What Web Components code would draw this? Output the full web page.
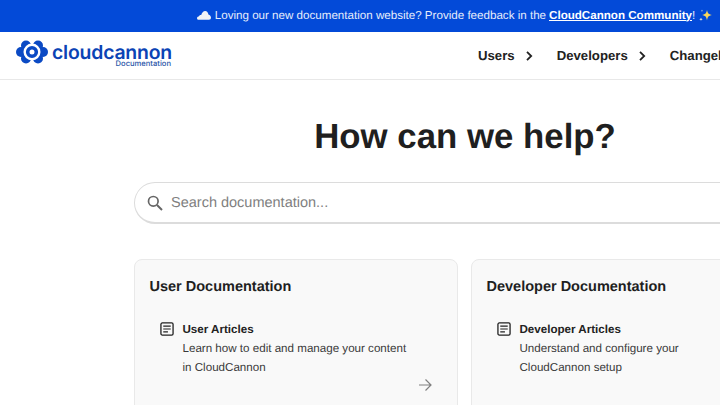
<!DOCTYPE html>
<html lang="en">
<head>
<meta charset="utf-8">
<title>CloudCannon Documentation</title>
<style>
  html, body { margin: 0; height: 405px; overflow: hidden; background: #fff; }
  body { font-family: "Liberation Sans", Arial, sans-serif; color: #1f1f1f; text-rendering: geometricPrecision; }
</style>
</head>
<body>
<docs-page>
  <top-banner slot="banner"></top-banner>
  <site-header slot="header"></site-header>
  <search-hero slot="hero"></search-hero>
  <doc-card title="User Documentation" item="User Articles" arrow>Learn how to edit and manage your content<br>in CloudCannon</doc-card>
  <doc-card title="Developer Documentation" item="Developer Articles">Understand and configure your<br>CloudCannon setup</doc-card>
</docs-page>

<script>
const pageTemplate = document.createElement('template');
pageTemplate.innerHTML = `
  <style>
    :host { display: block; width: 930px; height: 405px; overflow: hidden; }
    .cards {
      display: grid;
      grid-template-columns: 324px 325px;
      gap: 13px;
      padding: 35px 0 0 134px;
    }
  </style>
  <slot name="banner"></slot>
  <slot name="header"></slot>
  <slot name="hero"></slot>
  <div class="cards"><slot></slot></div>
`;

class DocsPage extends HTMLElement {
  constructor() {
    super();
    this.attachShadow({ mode: 'open' }).appendChild(pageTemplate.content.cloneNode(true));
  }
}

const bannerTemplate = document.createElement('template');
bannerTemplate.innerHTML = `
  <style>
    :host {
      display: flex;
      justify-content: center;
      align-items: center;
      box-sizing: border-box;
      height: 32px;
      width: 930px;
      padding: 0 20px 2px 0;
      background: #034ad8;
      color: #e6edfb;
      font-size: 11.600px;
      white-space: nowrap;
    }
    svg { flex: none; }
    .cloud { margin-right: 4px; }
    .spark { margin-left: 3px; }
    a { color: #fff; font-weight: 700; text-decoration: underline; margin-left: 3px; }
  </style>
  <svg class="cloud" width="14" height="10" viewBox="0 0 14 10">
    <path fill="#f1f3f6" d="M1.500 9.800C.5 9.800 0 9 0 8.200 0 7.200.8 6.500 1.800 6.500 2.200 5.300 3.200 4.800 4.200 5 4.800 3 6.300 1 8.200 1c1.700 0 3 1.600 3.200 3.500C13 4.900 14 6.400 14 7.800c0 1.300-.8 2-2 2z"/>
  </svg>
  <span>Loving our new documentation website? Provide feedback in the<a href="#">CloudCannon Community</a>!</span>
  <svg class="spark" width="15" height="15" viewBox="0 0 15 15">
    <path fill="#fbd75b" d="M9 2c.6 3.200 1.500 4.300 5 5-3.500.7-4.400 1.800-5 5.500-.6-3.700-1.500-4.800-5-5.500 3.500-.7 4.400-1.800 5-5z"/>
    <path fill="#f4f1dc" d="M3 9.500c.2 1.200.6 1.600 1.800 1.800-1.200.2-1.600.6-1.800 1.900-.2-1.300-.6-1.700-1.800-1.900 1.200-.2 1.600-.6 1.800-1.800z"/>
    <path fill="#f4f1dc" d="M4 1.500c.1.900.4 1.200 1.300 1.300-.9.1-1.200.4-1.300 1.300-.1-.9-.4-1.200-1.300-1.300.9-.1 1.200-.4 1.300-1.300z"/>
  </svg>
`;

class TopBanner extends HTMLElement {
  constructor() {
    super();
    this.attachShadow({ mode: 'open' }).appendChild(bannerTemplate.content.cloneNode(true));
  }
}

const headerTemplate = document.createElement('template');
headerTemplate.innerHTML = `
  <style>
    :host {
      display: flex;
      align-items: center;
      box-sizing: border-box;
      height: 48px;
      padding: 0 0 0 16px;
      border-bottom: 1px solid #e8e8e8;
      white-space: nowrap;
    }
    .logo { display: flex; align-items: flex-start; gap: 4px; margin-bottom: 3px; }
    .words { display: flex; flex-direction: column; align-items: flex-end; margin-top: 4px; }
    .name { font: 600 19.400px/16px Inter, sans-serif; letter-spacing: -.2px; color: #0b43b5; }
    .sub { font: 500 7.600px/8px Inter, sans-serif; margin-right: 1px; color: #2a55a8; }
    nav { display: flex; align-items: center; margin-left: 306px; flex: 1; }
    .link { display: flex; align-items: center; font-size: 13.200px; font-weight: 700; color: #222; }
    .link svg { margin: 0 24px 0 10px; }
  </style>
  <div class="logo">
    <svg width="32" height="24" viewBox="0 0 32 24">
      <g fill="#0b4ac4">
        <circle cx="10" cy="5.500" r="5"/><circle cx="5" cy="12" r="5"/><circle cx="8" cy="12" r="5"/><circle cx="10" cy="18.500" r="5"/>
        <circle cx="22" cy="5.500" r="5"/><circle cx="27" cy="12" r="5"/><circle cx="24" cy="12" r="5"/><circle cx="22" cy="18.500" r="5"/>
      </g>
      <circle cx="16" cy="12" r="8.500" fill="#fff"/>
      <circle cx="16" cy="12" r="4.300" fill="none" stroke="#0b4ac4" stroke-width="3.600"/>
    </svg>
    <div class="words">
      <span class="name">cloudcannon</span>
      <span class="sub">Documentation</span>
    </div>
  </div>
  <nav>
    <span class="link">Users<svg width="8" height="12" viewBox="0 0 8 12"><path d="M2 1.800L6.200 6 2 10.200" fill="none" stroke="#222" stroke-width="1.800"/></svg></span>
    <span class="link">Developers<svg width="8" height="12" viewBox="0 0 8 12"><path d="M2 1.800L6.200 6 2 10.200" fill="none" stroke="#222" stroke-width="1.800"/></svg></span>
    <span class="link">Changelog</span>
  </nav>
`;

class SiteHeader extends HTMLElement {
  constructor() {
    super();
    this.attachShadow({ mode: 'open' }).appendChild(headerTemplate.content.cloneNode(true));
  }
}

const heroTemplate = document.createElement('template');
heroTemplate.innerHTML = `
  <style>
    :host { display: block; padding-left: 134px; width: 662px; }
    h1 {
      margin: 0;
      padding-top: 36px;
      text-align: center;
      font-size: 34.800px;
      line-height: 42px;
      font-weight: 700;
      color: #1f1f1f;
    }
    .search {
      display: flex;
      align-items: center;
      gap: 8px;
      box-sizing: border-box;
      height: 42px;
      margin-top: 24px;
      padding-left: 12px;
      border: 1px solid #dcdcdc;
      border-bottom-width: 2px;
      border-radius: 21px;
      color: #808080;
      font-size: 14.500px;
    }
  </style>
  <h1>How can we help?</h1>
  <div class="search">
    <svg width="16" height="16" viewBox="0 0 16 16">
      <circle cx="6.300" cy="6.300" r="4.800" fill="none" stroke="#666" stroke-width="1.700"/>
      <path d="M10 10l5 5" stroke="#666" stroke-width="1.900"/>
    </svg>
    <span>Search documentation...</span>
  </div>
`;

class SearchHero extends HTMLElement {
  constructor() {
    super();
    this.attachShadow({ mode: 'open' }).appendChild(heroTemplate.content.cloneNode(true));
  }
}

const cardTemplate = document.createElement('template');
cardTemplate.innerHTML = `
  <style>
    :host {
      display: block;
      box-sizing: border-box;
      height: 200px;
      padding: 18px 15px 17px 14.500px;
      background: #f9f9f9;
      border: 1px solid #e9e9e9;
      border-radius: 8px;
    }
    h2 { margin: 0; font-size: 14.500px; line-height: 18px; font-weight: 700; color: #1f1f1f; }
    .item { display: flex; gap: 9px; margin-top: 24px; padding-left: 10px; }
    svg.doc { flex: none; margin-top: 2px; }
    .body { flex: 1; }
    strong { display: block; font-size: 11.600px; line-height: 19px; color: #222; }
    p { margin: 0; font-size: 11.600px; line-height: 19px; color: #3a3a3a; }
    .arrow { display: block; margin: 1px 10px 0 auto; }
    .arrow[hidden] { display: none; }
  </style>
  <h2></h2>
  <div class="item">
    <svg class="doc" width="14" height="14" viewBox="0 0 15 15" fill="none" stroke="#222">
      <rect x="1" y="1" width="13" height="13" rx="1.500" stroke-width="1.400"/>
      <path d="M3.500 4.500h8M3.500 7.500h8M3.500 10.500h5" stroke-width="1.300"/>
    </svg>
    <div class="body">
      <strong></strong>
      <p><slot></slot></p>
      <svg class="arrow" width="14" height="14" viewBox="0 0 14 14" fill="none" stroke="#808080" stroke-width="1.200">
        <path d="M1 7h12M7.500 1.500L13 7l-5.500 5.500"/>
      </svg>
    </div>
  </div>
`;

class DocCard extends HTMLElement {
  constructor() {
    super();
    const root = this.attachShadow({ mode: 'open' });
    root.appendChild(cardTemplate.content.cloneNode(true));
    root.querySelector('h2').textContent = this.getAttribute('title');
    root.querySelector('strong').textContent = this.getAttribute('item');
    root.querySelector('.arrow').hidden = !this.hasAttribute('arrow');
  }
}

customElements.define('docs-page', DocsPage);
customElements.define('top-banner', TopBanner);
customElements.define('site-header', SiteHeader);
customElements.define('search-hero', SearchHero);
customElements.define('doc-card', DocCard);
</script>
</body>
</html>
